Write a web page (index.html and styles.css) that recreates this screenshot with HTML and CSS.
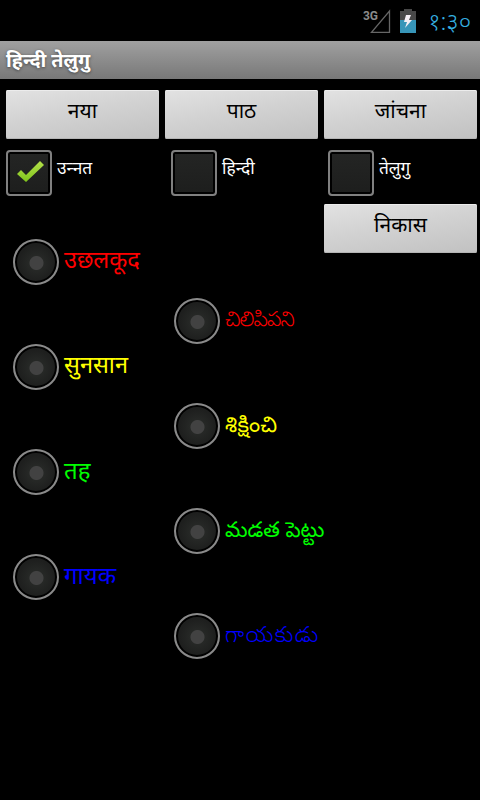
FILE: index.html
```html
<!DOCTYPE html>
<html lang="hi">
<head>
    <meta charset="UTF-8">
    <title>हिन्दी तेलुगु</title>
    <link rel="stylesheet" href="styles.css">
</head>
<body>
    <div class="status">
        <svg class="signal" width="28" height="26" viewBox="0 0 28 26">
            <text x="0" y="10.5" class="net" textLength="15">3G</text>
            <path d="M8.5 23.3H26.5V2Z" fill="none" stroke="#666" stroke-width="1.3"/>
        </svg>
        <svg class="battery" width="16" height="24" viewBox="0 0 16 24">
            <path d="M0 2H4V0H12V2H16V11H0Z" fill="#484848"/>
            <path d="M0 11H16V24H0Z" fill="#3795b8"/>
            <path d="M6 6H11L9 11H12L5 19L7 13H4Z" fill="#f4eef4"/>
        </svg>
        <span class="clock">१:३०</span>
    </div>
    <div class="title">हिन्दी तेलुगु</div>
    <div class="buttons">
        <button class="btn">नया</button>
        <button class="btn">पाठ</button>
        <button class="btn">जांचना</button>
    </div>
    <div class="checks">
        <label class="check"><span class="box">
            <svg width="46" height="46" viewBox="0 0 46 46">
                <defs>
                    <linearGradient id="tick" x1="0" y1="0" x2="0" y2="1">
                        <stop offset="0" stop-color="#b4e04a"/>
                        <stop offset="1" stop-color="#7fc41c"/>
                    </linearGradient>
                </defs>
                <path d="M11 24L15 20L20 25L34 11L38 15L20 32Z" fill="url(#tick)"/>
            </svg>
        </span><span>उन्&zwj;नत</span></label>
        <label class="check"><span class="box"></span><span>हिन्दी</span></label>
        <label class="check"><span class="box"></span><span>तेलुगु</span></label>
    </div>
    <div class="words">
        <div class="col hindi">
            <label class="word red"><span class="radio"></span><span>उछलकूद</span></label>
            <label class="word yellow"><span class="radio"></span><span>सुनसान</span></label>
            <label class="word green"><span class="radio"></span><span>तह</span></label>
            <label class="word blue"><span class="radio"></span><span>गायक</span></label>
        </div>
        <div class="col telugu" lang="te">
            <label class="word red"><span class="radio"></span><span>చిలిపిపని</span></label>
            <label class="word yellow"><span class="radio"></span><span>శిక్షించి</span></label>
            <label class="word green"><span class="radio"></span><span>మడత పెట్టు</span></label>
            <label class="word blue"><span class="radio"></span><span>గాయకుడు</span></label>
        </div>
        <button class="btn">निकास</button>
    </div>
</body>
</html>
```

FILE: styles.css
```css
body {
    margin: 0;
    background: #000;
    color: #fff;
    font-family: "Noto Sans", "Noto Sans Devanagari", "Noto Sans Telugu", sans-serif;
}
.status {
    display: flex;
    height: 41px;
    box-sizing: border-box;
    padding: 9px 9px 0 0;
    justify-content: flex-end;
}
.net {
    font: bold 12px Roboto, sans-serif;
    fill: #8a8a8a;
}
.battery {
    margin: 0 12px 0 9px;
}
.clock {
    width: 43px;
    color: #35b0e0;
    font-size: 24px;
    font-weight: 300;
    line-height: 23px;
    white-space: nowrap;
}
.title {
    height: 38px;
    box-sizing: border-box;
    padding-left: 6px;
    background: linear-gradient(#a0a0a0, #787878);
    font-size: 19.7px;
    font-weight: bold;
    line-height: 37px;
    text-shadow: 0 1px 3px #444;
}
.buttons {
    display: flex;
    gap: 6px;
    padding: 11px 0 0 6px;
}
.btn {
    width: 153px;
    height: 49px;
    padding: 0 0 8px;
    border: 0;
    border-radius: 2px;
    background: linear-gradient(170deg, #e2e2e2, #d2d2d2 45%, #c1c1c1);
    box-shadow: inset 0 1px #ececec, inset 0 -1px #b4b4b4;
    color: #000;
    font-family: inherit;
    font-size: 21px;
    line-height: 41px;
}
.checks {
    display: grid;
    grid-template-columns: 165px 157px 140px;
    padding: 11px 0 0 6px;
}
.check {
    display: flex;
    gap: 5px;
    height: 46px;
    font-size: 17.3px;
    line-height: 35px;
}
.box {
    width: 46px;
    height: 46px;
    box-sizing: border-box;
    border: 2px solid #808080;
    border-radius: 4px;
    background: linear-gradient(#242524, #1d1e1d);
    box-shadow: inset 0 0 0 2px #000;
}
.box svg {
    display: block;
    margin: -2px;
}
.words {
    display: grid;
    grid-template-columns: 161px 150px 153px;
    padding: 8px 0 0 13px;
}
.col {
    display: flex;
    flex-direction: column;
    gap: 59px;
    padding-top: 35px;
}
.telugu {
    padding-top: 94px;
}
.word {
    display: flex;
    gap: 5px;
    height: 46px;
    font-size: 23.5px;
    line-height: 41px;
    white-space: nowrap;
}
.hindi .green, .hindi .blue {
    font-size: 24px;
}
.telugu .word {
    font-size: 21px;
    font-weight: 300;
}
.telugu .red {
    letter-spacing: -0.9px;
}
.telugu .yellow {
    font-size: 22px;
    font-weight: 400;
    letter-spacing: 0.3px;
}
.telugu .green {
    font-size: 21.3px;
    font-weight: 400;
}
.telugu .blue {
    font-size: 22px;
    letter-spacing: 1.5px;
}
.radio {
    flex: none;
    width: 46px;
    height: 46px;
    box-sizing: border-box;
    border: 2px solid #8a8a8a;
    border-radius: 50%;
    background: radial-gradient(circle at 21.5px 22px, #424242 6.5px, #262826 7.5px, #1e1f1e 18px);
    box-shadow: inset 0 0 0 2px #000;
}
.red {
    color: #f00;
}
.yellow {
    color: #ff0;
}
.green {
    color: #0f0;
}
.blue {
    color: #00f;
}
```
